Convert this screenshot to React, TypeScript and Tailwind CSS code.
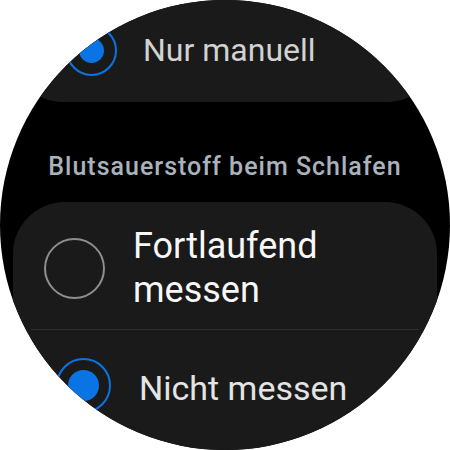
import React from 'react'

function Radio({ size, dot, checked }: { size: number; dot?: number; checked?: boolean }) {
  if (!checked) {
    return (
      <div
        className="shrink-0 rounded-full border-2 border-[#8e8e8e]"
        style={{ width: size, height: size }}
      />
    )
  }
  return (
    <div
      className="shrink-0 rounded-full border-2 border-[#0b74e5] flex items-center justify-center"
      style={{ width: size, height: size }}
    >
      <div className="rounded-full bg-[#0b74e5]" style={{ width: dot, height: dot }} />
    </div>
  )
}

export default function App() {
  return (
    <div className="w-[450px] h-[450px] bg-white" style={{ fontFamily: 'Roboto, "Noto Sans", sans-serif' }}>
      <div className="w-[450px] h-[450px] rounded-full overflow-hidden bg-black flex flex-col">
        {/* previous setting, scrolled up */}
        <div className="mx-[13px] mt-[-50px] h-[152px] shrink-0 rounded-[50px] bg-[#1a1a1a] pt-[75px]">
          <div className="h-[50px] flex items-center pl-[53px] gap-[26px]">
            <Radio size={51} dot={25} checked />
            <span className="text-[32px] text-[#d2d2d2] whitespace-nowrap">Nur manuell</span>
          </div>
        </div>

        <div className="mt-[50px] text-center text-[25px] leading-[30px] tracking-[1px] font-medium text-[#a9b3bc] whitespace-nowrap">
          Blutsauerstoff beim Schlafen
        </div>

        <div className="mx-[13px] mt-[20px] flex-1 rounded-t-[52px] bg-[#1a1a1a]">
          <div className="flex items-center pl-[31px] gap-[28px] pt-[22px] pb-[17px]">
            <Radio size={61} />
            <span className="text-[36px] leading-[44px] text-[#f7f7f7]">
              Fortlaufend
              <br />
              messen
            </span>
          </div>
          <div className="mx-[18px] h-px bg-[#2e2e2e]" />
          <div className="pt-[27px] h-[56px] box-content flex items-center pl-[43px] gap-[28px]">
            <Radio size={55} dot={31} checked />
            <span className="text-[34px] text-[#e4e4e4] whitespace-nowrap translate-y-[3px]">Nicht messen</span>
          </div>
        </div>
      </div>
    </div>
  )
}
